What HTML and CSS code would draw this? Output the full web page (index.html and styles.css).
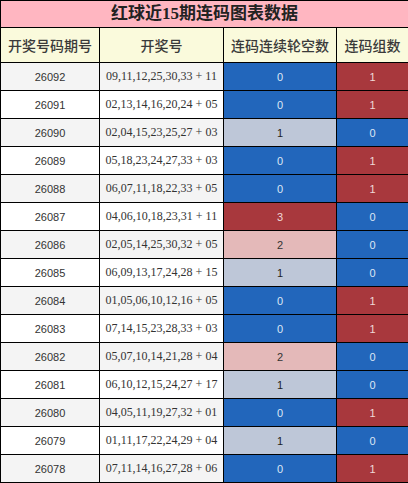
FILE: index.html
```html
<!DOCTYPE html>
<html lang="zh-CN">
<head>
    <meta charset="UTF-8">
    <title>红球近15期连码图表数据</title>
    <link rel="stylesheet" href="styles.css">
</head>
<body>
    <table class="chart">
        <colgroup>
            <col class="col-issue">
            <col class="col-draw">
            <col class="col-gap">
            <col class="col-group">
        </colgroup>
        <thead>
            <tr class="title-row">
                <th colspan="4">红球近15期连码图表数据</th>
            </tr>
            <tr class="head-row">
                <th>开奖号码期号</th>
                <th>开奖号</th>
                <th>连码连续轮空数</th>
                <th>连码组数</th>
            </tr>
        </thead>
        <tbody>
            <tr><td>26092</td><td class="draw">09,11,12,25,30,33 + 11</td><td class="c-blue">0</td><td class="c-red">1</td></tr>
            <tr><td>26091</td><td class="draw">02,13,14,16,20,24 + 05</td><td class="c-blue">0</td><td class="c-red">1</td></tr>
            <tr><td>26090</td><td class="draw">02,04,15,23,25,27 + 03</td><td class="c-grey">1</td><td class="c-blue">0</td></tr>
            <tr><td>26089</td><td class="draw">05,18,23,24,27,33 + 03</td><td class="c-blue">0</td><td class="c-red">1</td></tr>
            <tr><td>26088</td><td class="draw">06,07,11,18,22,33 + 05</td><td class="c-blue">0</td><td class="c-red">1</td></tr>
            <tr><td>26087</td><td class="draw">04,06,10,18,23,31 + 11</td><td class="c-red">3</td><td class="c-blue">0</td></tr>
            <tr><td>26086</td><td class="draw">02,05,14,25,30,32 + 05</td><td class="c-pink">2</td><td class="c-blue">0</td></tr>
            <tr><td>26085</td><td class="draw">06,09,13,17,24,28 + 15</td><td class="c-grey">1</td><td class="c-blue">0</td></tr>
            <tr><td>26084</td><td class="draw">01,05,06,10,12,16 + 05</td><td class="c-blue">0</td><td class="c-red">1</td></tr>
            <tr><td>26083</td><td class="draw">07,14,15,23,28,33 + 03</td><td class="c-blue">0</td><td class="c-red">1</td></tr>
            <tr><td>26082</td><td class="draw">05,07,10,14,21,28 + 04</td><td class="c-pink">2</td><td class="c-blue">0</td></tr>
            <tr><td>26081</td><td class="draw">06,10,12,15,24,27 + 17</td><td class="c-grey">1</td><td class="c-blue">0</td></tr>
            <tr><td>26080</td><td class="draw">04,05,11,19,27,32 + 01</td><td class="c-blue">0</td><td class="c-red">1</td></tr>
            <tr><td>26079</td><td class="draw">01,11,17,22,24,29 + 04</td><td class="c-grey">1</td><td class="c-blue">0</td></tr>
            <tr><td>26078</td><td class="draw">07,11,14,16,27,28 + 06</td><td class="c-blue">0</td><td class="c-red">1</td></tr>
        </tbody>
    </table>
</body>
</html>
```
FILE: styles.css
```css
* {
    margin: 0;
    padding: 0;
    box-sizing: border-box;
}

body {
    font-family: "Liberation Sans", "Noto Sans CJK SC", sans-serif;
    background: #fff;
    color: #333;
}

.chart {
    width: 408px;
    border-collapse: collapse;
    table-layout: fixed;
}

.col-issue { width: 99px; }
.col-draw { width: 124px; }
.col-gap { width: 113px; }
.col-group { width: 72px; }

.chart th,
.chart td {
    border: 1px solid #000;
    text-align: center;
    vertical-align: middle;
    white-space: nowrap;
}

.title-row th {
    height: 27px;
    background: #ffb6c1;
    color: #222;
    font-family: "Liberation Serif", "Noto Sans CJK SC", serif;
    font-size: 17px;
    font-weight: bold;
    line-height: 20px;
}

.head-row th {
    height: 35px;
    background: #fafadc;
    color: #3a3a3a;
    font-family: "Noto Sans CJK SC", sans-serif;
    font-size: 14px;
    font-weight: 500;
}

.chart td {
    height: 28px;
    font-size: 11px;
    color: #333;
}

.chart tbody tr:nth-child(odd) td {
    background: #f4f4f4;
}

.chart tbody tr:nth-child(even) td {
    background: #fff;
}

.chart td.draw {
    font-family: "Liberation Serif", serif;
    font-size: 12px;
}

/* cell colours must beat the zebra rows */
.chart tbody tr td.c-blue {
    background: #2266bb;
    color: #dde6f4;
}

.chart tbody tr td.c-red {
    background: #a8383d;
    color: #f0d8d8;
}

.chart tbody tr td.c-grey {
    background: #bec7d8;
    color: #222;
}

.chart tbody tr td.c-pink {
    background: #e4b9b9;
    color: #333;
}
```
